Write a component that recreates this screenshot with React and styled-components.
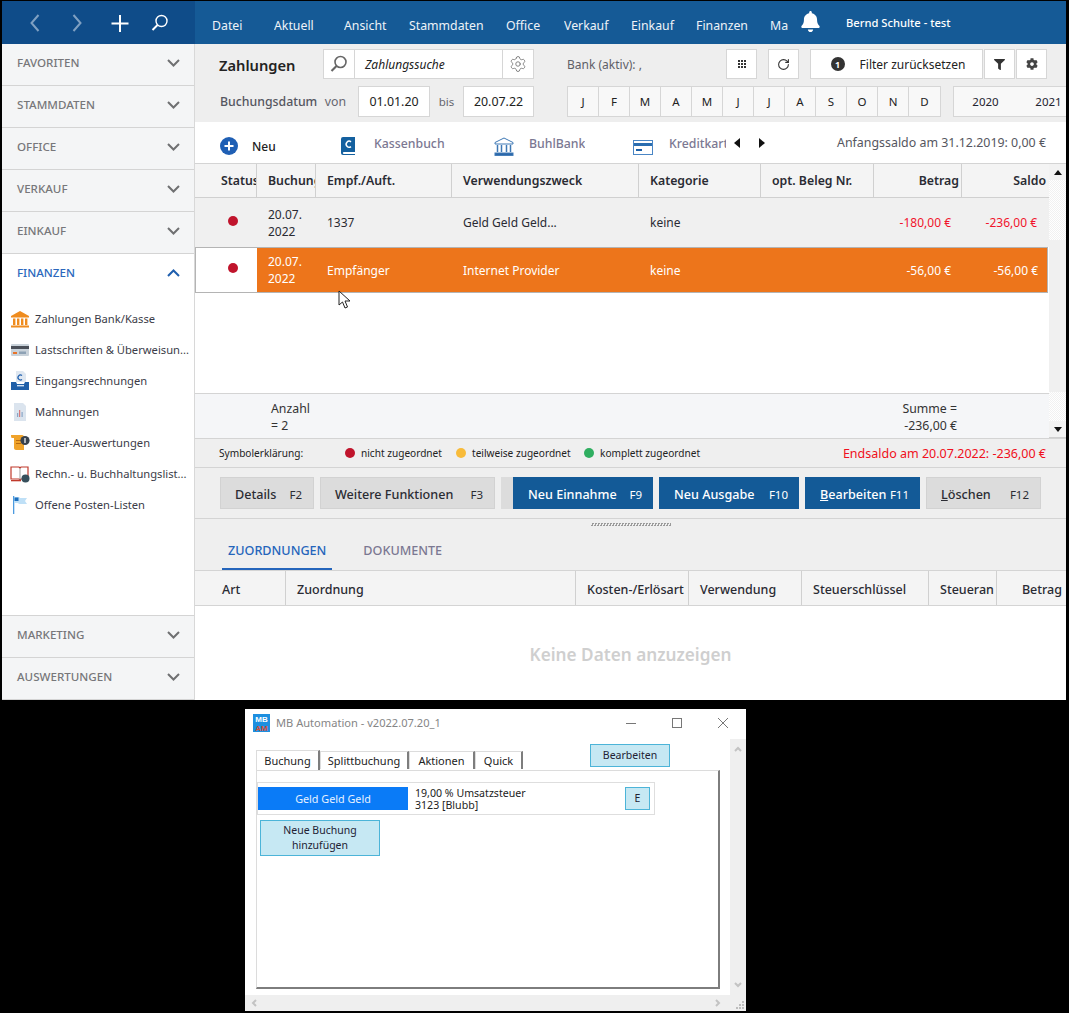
import React from 'react';
import styled, { createGlobalStyle } from 'styled-components';
import { FaBell, FaCog, FaFilter } from 'react-icons/fa';
import { RotateCw, Settings } from 'lucide-react';

const Global = createGlobalStyle`
  html, body { margin: 0; padding: 0; background: #000; }
  * { box-sizing: border-box; }
  body { font-family: "Noto Sans", "Open Sans", sans-serif; font-size: 12px; color: #1f2430; }
`;

const Page = styled.div`
  position: relative; width: 1069px; height: 1013px; background: #000; overflow: hidden;
  padding: 1px 3px 0 2px;
`;
const AppFrame = styled.div`
  width: 1064px; height: 699px; background: #fff; display: flex; flex-direction: column; overflow: hidden;
`;
const TopBar = styled.header`
  display: flex; height: 43px; flex: none; background: #155a96; color: #fff;
`;
const QuickBar = styled.div`
  width: 193px; background: #0f4c89; display: flex; align-items: center; padding-left: 23px; gap: 20px; flex: none;
`;
const QuickIcon = styled.svg`
  width: 22px; height: 22px; fill: none; stroke: ${p => p.$dim ? '#7fa0c2' : '#fff'}; stroke-width: 2; display: block;
`;
const Menu = styled.nav`
  display: flex; align-items: center; padding-left: 17px; flex: 1; position: relative;
`;
const MenuItem = styled.span`
  width: ${p => p.$w}px; flex: none; font-size: 12.3px; white-space: nowrap; overflow: hidden; color: #eef3f8; margin-top: 5px;
`;
const Bell = styled.span`
  display: flex; margin-left: 0; font-size: 21px; margin-top: -2px; width: 46px; flex: none;
`;
const UserName = styled.span`
  font-size: 11.2px; font-weight: 500; color: #fff; margin-top: -1px;
`;

const Body = styled.div`
  flex: 1; display: flex; min-height: 0;
`;
const Sidebar = styled.aside`
  width: 193px; flex: none; background: #fff; border-right: 1px solid #d8d8d8; display: flex; flex-direction: column;
`;
const SideHead = styled.div`
  height: 42px; flex: none; display: flex; align-items: center; justify-content: space-between;
  padding: 0 14px 4px 15px; background: ${p => p.$open ? '#fff' : '#f4f5f6'}; border-bottom: 1px solid ${p => p.$open ? 'transparent' : '#d4d4d4'};
  font-size: 11.6px; font-weight: 500; color: ${p => p.$open ? '#2b68bd' : '#77777a'};
`;
const Chevron = styled.svg`
  width: 13px; height: 8px; fill: none; stroke: ${p => p.$open ? '#1f5fae' : '#6f7072'}; stroke-width: 2;
`;
const SideList = styled.ul`
  list-style: none; margin: 0; padding: 7px 0 0 8px; flex: 1; border-bottom: 1px solid #d4d4d4;
`;
const SideItem = styled.li`
  height: 31px; display: flex; align-items: center; gap: 5px; font-size: 11.2px; color: #3b3c48; white-space: nowrap;
`;
const SideIcon = styled.svg`
  width: 20px; height: 20px; flex: none;
`;

const Main = styled.main`
  flex: 1; min-width: 0; display: flex; flex-direction: column; background: #efefef;
`;
const Toolbar = styled.section`
  height: 78px; flex: none; background: #eeeeee; display: flex; flex-direction: column; gap: 7px; padding: 5px 0 0 24px; overflow: hidden;
`;
const ToolRow = styled.div`
  display: flex; align-items: center; height: ${p => p.$h}px; flex: none;
`;
const PageTitle = styled.h1`
  margin: 0; font-size: 14.7px; font-weight: 600; width: 104px; flex: none; color: #222; margin-top: 1px;
`;
const WhiteBox = styled.div`
  display: flex; align-items: center; justify-content: center; background: #fff; border: 1px solid #d6d6d6;
  width: ${p => p.$w}px; height: 100%; flex: none; margin-left: ${p => p.$ml || 0}px; font-size: ${p => p.$fs || 12}px; color: #222;
  padding-left: ${p => p.$pl || 0}px;
`;
const SearchText = styled(WhiteBox)`
  justify-content: flex-start; padding-left: 10px; font-style: italic; font-size: 12px; border-left: 0; border-right: 0;
`;
const BankText = styled.span`
  font-size: 12px; color: #5f5f68; margin-left: 33px; width: 159px; flex: none;
`;
const DateLabel = styled.span`
  font-weight: 500; font-size: 12.3px; color: #55565f; flex: none; width: 126px; display: flex; justify-content: space-between; margin-left: 1px; white-space: nowrap;
`;
const SmallLabel = styled.span`
  color: #66666e; font-size: 11.5px; width: 33px; flex: none; text-align: center;
`;
const VonLabel = styled.span` font-weight: 400; color: #66666e; `;
const Months = styled.div`
  display: flex; margin-left: 33px; height: 100%; flex: none; border: 1px solid #d6d6d6; background: #f8f8f8;
`;
const Month = styled.span`
  width: 31px; flex: none; display: flex; align-items: center; justify-content: center; font-size: 11.5px; border-right: 1px solid #d6d6d6; color: #222;
  &:last-child { border-right: 0; }
`;
const Years = styled.div`
  display: flex; margin-left: 12px; height: 100%; flex: none; border: 1px solid #d6d6d6; background: #f8f8f8;
`;
const Year = styled.span`
  width: 63px; flex: none; display: flex; align-items: center; justify-content: center; font-size: 11.5px;
`;
const FilterIconCircle = styled.span`
  width: 14px; height: 14px; border-radius: 50%; background: #333; color: #fff; font-size: 9px; font-weight: 700; display: flex; align-items: center; justify-content: center; margin-right: 15px;
`;
const DotsGrid = styled.span`
  display: grid; grid-template-columns: repeat(3, 2px); gap: 1px;
`;
const Dot2 = styled.i` width: 2px; height: 2px; background: #333; display: block; `;

const AccountBar = styled.section`
  height: 41px; flex: none; background: #fff; display: flex; align-items: center; padding-left: 25px; overflow: hidden;
`;
const NewCircle = styled.svg`
  width: 18px; height: 18px; flex: none; margin-top: 6px;
`;
const NewLabel = styled.span`
  font-size: 12px; font-weight: 500; color: #222; margin-left: 14px; width: 89px; flex: none; margin-top: 8px;
`;
const Account = styled.span`
  display: flex; align-items: flex-start; height: 100%; flex: none; width: ${p => p.$w}px; font-size: 12.3px; font-weight: 500; color: #7b7892; overflow: hidden; white-space: nowrap;
`;
const AccountGlyph = styled.svg`
  flex: none; margin-top: ${p => p.$mt}px; display: block;
`;
const AccountText = styled.span`
  margin-left: ${p => p.$ml}px; margin-top: 13px; display: block; flex: none; width: ${p => p.$tw ? p.$tw + 'px' : 'auto'}; overflow: hidden;
`;
const Arrows = styled.span`
  display: flex; gap: 19px; margin-left: 8px; flex: none;
`;
const Triangle = styled.svg` width: 6px; height: 10px; fill: #111; display: block; `;
const Saldo = styled.span`
  margin-left: auto; padding-right: 20px; font-size: 12.4px; color: #555660; white-space: nowrap; margin-top: -1px;
`;

const TableWrap = styled.section`
  height: 275px; flex: none; display: flex; background: #fff; border-top: 1px solid #d4d4d4;
`;
const TableCol = styled.div`
  width: 854px; flex: none; display: flex; flex-direction: column;
`;
const Cols = '62px 59px 136px 187px 122px 113px 88px 87px';
const HeadRow = styled.div`
  display: grid; grid-template-columns: ${Cols}; height: 34px; flex: none; background: #f4f4f4; border-bottom: 1px solid #d0d0d0;
`;
const HeadCell = styled.div`
  display: flex; align-items: center; overflow: hidden; white-space: nowrap; font-size: 12.3px; font-weight: 600; color: #2a2b33;
  padding: ${p => p.$right ? `0 ${p.$pr ?? 2}px 0 0` : `0 0 0 ${p.$pl ?? 11}px`}; justify-content: ${p => p.$right ? 'flex-end' : 'flex-start'};
  border-right: ${p => p.$last ? '0' : '1px solid #d0d0d0'};
`;
const DataRow = styled.div`
  display: grid; grid-template-columns: ${Cols}; flex: none; height: ${p => p.$h}px; position: relative;
  background: ${p => p.$active ? '#ed751b' : '#f0f0f0'}; color: ${p => p.$active ? '#fff' : '#2a2b33'};
  ${p => p.$active ? 'outline: 1px solid #b4b4b4; outline-offset: -1px; width: 853px;' : ''}
`;
const Cell = styled.div`
  display: flex; align-items: center; font-size: 12px; line-height: 17px; padding: ${p => p.$right ? `0 ${p.$pr}px 0 0` : '0 0 0 11px'};
  justify-content: ${p => p.$right ? 'flex-end' : 'flex-start'}; color: ${p => p.$red ? '#f0142c' : 'inherit'};
`;
const StatusCell = styled.div`
  display: flex; align-items: center; padding-left: ${p => p.$white ? 32 : 33}px; background: ${p => p.$white ? '#fff' : 'transparent'};
  ${p => p.$white ? 'border: 1px solid #b4b4b4; border-right: 0;' : ''} padding-bottom: 4px;
`;
const Dot = styled.span`
  width: ${p => p.$s || 10}px; height: ${p => p.$s || 10}px; border-radius: 50%; background: ${p => p.$c}; flex: none; display: block;
`;
const TableSpace = styled.div` flex: 1; background: #fff; `;
const Totals = styled.div`
  height: 45px; flex: none; background: #f5f6f8; border-top: 1px solid #d4d4d4; display: flex; font-size: 12.3px; line-height: 17px; color: #333;
  padding: 6px 0 0 76px;
`;
const TotalRight = styled.div`
  margin-left: auto; margin-right: 92px; text-align: right; white-space: pre;
`;
const ScrollRail = styled.div`
  width: 17px; flex: none; display: flex; flex-direction: column;
  background: repeating-conic-gradient(#f1f1f1 0 25%, #fff 0 50%) 0 0 / 2px 2px;
  border-bottom: 1px solid #cfcfcf;
`;
const ScrollBtn = styled.div`
  height: ${p => p.$h}px; flex: none; background: #f2f2f2; display: flex; align-items: center; justify-content: center;
`;
const ScrollThumb = styled.div`
  height: 152px; margin-top: 60px; margin-bottom: auto; background: #f0f0f0; flex: none;
`;
const ArrowTip = styled.svg` width: 8px; height: 5px; fill: #111; `;

const Legend = styled.section`
  height: 30px; flex: none; background: #efefef; border-top: 1px solid #d4d4d4; border-bottom: 1px solid #d4d4d4; display: flex; align-items: center; padding: 0 20px 0 24px; font-size: 10.1px; color: #222;
`;
const LegendTitle = styled.span` width: 126px; flex: none; `;
const LegendItem = styled.span`
  display: flex; align-items: center; gap: 6px; flex: none; width: ${p => p.$w}px;
`;
const EndSaldo = styled.span`
  margin-left: auto; color: #f01020; font-size: 12.5px; white-space: nowrap;
`;
const Actions = styled.section`
  height: 51px; flex: none; background: #efefef; border-bottom: 1px solid #d4d4d4; display: flex; align-items: flex-start; padding: 9px 0 0 25px; gap: 6px;
`;
const ActionBtn = styled.button`
  width: ${p => p.$w}px; height: 32px; flex: none; border: ${p => p.$blue ? '0' : '1px solid #d2d2d2'}; background: ${p => p.$blue ? '#135a97' : '#dcdcdc'};
  color: ${p => p.$blue ? '#fff' : '#2b2c33'}; font-family: inherit; font-size: 12.6px; font-weight: 500; display: flex; align-items: center; justify-content: space-between;
  padding: 2px 11px 0 ${p => p.$blue ? 15 : 14}px; white-space: nowrap;
`;
const Key = styled.span` font-size: 11.5px; font-weight: 400; `;
const Stub = styled.div`
  width: 12px; height: 32px; flex: none; background: #dcdcdc; margin-right: -6px;
`;
const Grip = styled.div`
  width: 80px; height: 3px; margin: 4px auto 0; flex: none;
  background: repeating-conic-gradient(#9a9a9a 0 25%, #efefef 0 50%) 0 0 / 3px 3px;
`;
const DetailTabs = styled.div`
  height: 45px; flex: none; display: flex; align-items: flex-end; padding-left: 27px; background: #efefef; border-bottom: 1px solid #d4d4d4;
`;
const DetailTab = styled.span`
  font-size: 12.6px; font-weight: 500; color: ${p => p.$on ? '#2565bb' : '#7b7892'}; padding: 0 6px 9px; border-bottom: 2px solid ${p => p.$on ? '#2565bb' : 'transparent'}; margin-right: 25px;
`;
const GridHead = styled.div`
  display: grid; grid-template-columns: 91px 290px 113px 113px 127px 68px 1fr; height: 35px; flex: none; background: #f4f4f4; border-bottom: 1px solid #d4d4d4;
`;
const GridCell = styled(HeadCell)`
  font-weight: 500; font-size: 12.5px; padding-top: 2px;
`;
const Empty = styled.div`
  flex: 1; background: #fff; display: flex; align-items: center; justify-content: center; font-size: 17.2px; font-weight: 600; color: #cfcfcf; padding-top: 2px;
`;
const CursorMark = styled.svg`
  position: absolute; left: 338px; top: 290px; width: 13px; height: 19px;
`;

/* Tool window */
const ToolWindow = styled.div`
  position: absolute; left: 245px; top: 709px; width: 501px; height: 302px; background: #fff; display: flex; flex-direction: column;
`;
const WinTitle = styled.div`
  height: 30px; flex: none; display: flex; align-items: center; padding: 0 0 3px 8px; font-size: 11.1px; color: #858585;
`;
const WinLogo = styled.svg` width: 17px; height: 18px; margin-right: 6px; flex: none; `;
const WinText = styled.span` flex: 1; `;
const WinBtns = styled.div` display: flex; align-items: center; gap: 34px; padding-right: 17px; `;
const WinBtn = styled.svg` width: 12px; height: 12px; stroke: #777; fill: none; stroke-width: 1; display: block; `;
const WinBody = styled.div`
  flex: 1; display: flex; min-height: 0;
`;
const WinContent = styled.div`
  width: 485px; flex: none; padding: 5px 0 0 11px; display: flex; flex-direction: column; background: #fff;
`;
const TabStrip = styled.div`
  display: flex; height: 26px; flex: none; align-items: flex-end;
`;
const WinTab = styled.span`
  width: ${p => p.$w}px; height: ${p => p.$on ? 20 : 18}px; flex: none; font-size: 11px; color: #222; display: flex; align-items: center; justify-content: center; background: #fff;
  border-top: 1px solid #dcdcdc; border-left: 1px solid #dcdcdc; border-right: 2px solid #7d7d7d; margin-bottom: ${p => p.$on ? '0' : '1px'}; padding-bottom: 1px;
`;
const LightBtn = styled.button`
  background: #c6e8f3; border: 1px solid #4cb4d8; color: #223; font-family: inherit; font-size: 10.5px; padding: 0; flex: none; line-height: 15px;
  width: ${p => p.$w}px; height: ${p => p.$h}px; margin: ${p => p.$m || 0}; align-self: ${p => p.$top ? 'flex-start' : 'auto'};
`;
const Panel = styled.div`
  width: 464px; height: 219px; flex: none; background: #fff; border: 1px solid #dcdcdc; border-right: 2px solid #7d7d7d; border-bottom: 2px solid #7d7d7d; padding: 11px 0 0 0;
`;
const BookingCard = styled.div`
  width: 398px; height: 33px; border: 1px solid #dedede; display: flex; align-items: center;
`;
const BookingName = styled.div`
  width: 150px; height: 23px; background: #0a7bf7; color: #e8f2ff; font-size: 10.8px; display: flex; align-items: center; justify-content: center; flex: none;
`;
const BookingInfo = styled.div`
  font-size: 10.6px; line-height: 12px; color: #222; margin-left: 7px; flex: 1;
`;
const VScroll = styled.div`
  width: 16px; flex: none; background: #efefef; display: flex; flex-direction: column; justify-content: space-between; align-items: center; padding: 6px 0 6px;
`;
const HScroll = styled.div`
  height: 16px; flex: none; background: #efefef; display: flex; justify-content: space-between; align-items: center; padding: 0 24px 0 5px; position: relative;
`;
const ScrollGlyph = styled.svg` width: 8px; height: 8px; fill: none; stroke: #c3c3c3; stroke-width: 2; display: block; `;
const SizeGrip = styled.svg` position: absolute; right: 2px; bottom: 2px; width: 9px; height: 9px; fill: #bdbdbd; `;

const Down = ({ open }) => (
  <Chevron $open={open} viewBox="0 0 13 8"><path d={open ? 'M1 7l5.5-5.5L12 7' : 'M1 1l5.5 5.5L12 1'} /></Chevron>
);

const SideHeads = ['FAVORITEN', 'STAMMDATEN', 'OFFICE', 'VERKAUF', 'EINKAUF'];

const BankIcon = ({ c }) => (
  <SideIcon viewBox="0 0 20 20" fill={c}>
    <path d="M10 2L1 7v1.5h18V7z" /><rect x="3" y="9.5" width="2.4" height="6.5" /><rect x="7" y="9.5" width="2.4" height="6.5" /><rect x="11" y="9.5" width="2.4" height="6.5" /><rect x="15" y="9.5" width="2.4" height="6.5" /><rect x="1" y="16.5" width="18" height="2" />
  </SideIcon>
);
const CardIcon = () => (
  <SideIcon viewBox="0 0 20 20">
    <rect x="1" y="4" width="18" height="12" rx="1" fill="#c9d2da" /><rect x="1" y="6" width="18" height="3" fill="#4a4f58" /><rect x="3" y="12" width="4" height="2" fill="#e8742b" /><rect x="9" y="11.5" width="7" height="2.5" fill="#8ea2b5" />
  </SideIcon>
);
const InboxIcon = () => (
  <SideIcon viewBox="0 0 20 20">
    <path d="M6 0h7l3 3v8H6z" fill="#dfe7f0" /><path d="M12 4.5a2.5 2.5 0 100 4" fill="none" stroke="#1f5fae" strokeWidth="1.2" /><path d="M1 11h5l1 2h7l1-2h4v8H1z" fill="#1f5fa8" /><rect x="7" y="14" width="7" height="1.4" fill="#cfe0f3" />
  </SideIcon>
);
const DunIcon = () => (
  <SideIcon viewBox="0 0 20 20">
    <path d="M4 1h9l3 3v15H4z" fill="#dbe4ee" /><rect x="9" y="8" width="1.2" height="7" fill="#d77a7a" /><rect x="7" y="11" width="1.2" height="4" fill="#8ba6c6" /><rect x="11.5" y="10" width="1.2" height="5" fill="#8ba6c6" />
  </SideIcon>
);
const TaxIcon = () => (
  <SideIcon viewBox="0 0 20 20">
    <path d="M1 2h11c2 0 2 2 2 3v12H6c-1 0-2-1-2-2V5H2C1 5 1 3 1 2z" fill="#f0a32a" /><rect x="6" y="7" width="5" height="1" fill="#b76a10" /><rect x="6" y="10" width="5" height="1" fill="#b76a10" /><circle cx="15" cy="7.5" r="4.6" fill="#38424e" /><rect x="14.4" y="5" width="1.2" height="5" fill="#fff" />
  </SideIcon>
);
const BookIcon = () => (
  <SideIcon viewBox="0 0 20 20">
    <path d="M1 3h8l1 1 1-1h7v12h-7l-1 1-1-1H1z" fill="#fff" stroke="#c0392b" strokeWidth="1.2" /><rect x="9.6" y="4" width=".8" height="12" fill="#888" /><circle cx="15.5" cy="14.5" r="4" fill="#37505c" /><rect x="1" y="16" width="10" height="1.3" fill="#c0392b" />
  </SideIcon>
);
const FlagIcon = () => (
  <SideIcon viewBox="0 0 20 20">
    <rect x="3" y="1" width="1.3" height="18" fill="#4d9be0" /><path d="M4 2h5l1 1h7l-2 3 2 3h-8l-1-1H4z" fill="#bfe0f7" /><rect x="4.5" y="2.5" width="4" height="3.5" fill="#1c6fbe" />
  </SideIcon>
);

const Magnifier = ({ color = '#666', width = 1.6 }) => (
  <svg width="18" height="18" viewBox="0 0 18 18" fill="none" stroke={color} strokeWidth={width}>
    <circle cx="10.5" cy="7" r="5.5" /><path d="M6.5 11L1.5 16" strokeWidth={width + .6} />
  </svg>
);

const heads = [['Status', 26], ['Buchung', 11], ['Empf./Auft.', 11], ['Verwendungszweck', 11], ['Kategorie', 11], ['opt. Beleg Nr.', 11]];

export default function App() {
  return (
    <Page>
      <Global />
      <AppFrame>
        <TopBar>
          <QuickBar>
            <QuickIcon $dim viewBox="0 0 22 22"><path d="M13.5 3l-7 8 7 8" /></QuickIcon>
            <QuickIcon $dim viewBox="0 0 22 22"><path d="M6.5 3l7 8-7 8" /></QuickIcon>
            <QuickIcon viewBox="0 0 22 22"><path d="M11 3v17M2.5 11.5h17" /></QuickIcon>
            <Magnifier color="#fff" width={1.4} />
          </QuickBar>
          <Menu>
            <MenuItem $w={62}>Datei</MenuItem>
            <MenuItem $w={70}>Aktuell</MenuItem>
            <MenuItem $w={65}>Ansicht</MenuItem>
            <MenuItem $w={97}>Stammdaten</MenuItem>
            <MenuItem $w={58}>Office</MenuItem>
            <MenuItem $w={67}>Verkauf</MenuItem>
            <MenuItem $w={65}>Einkauf</MenuItem>
            <MenuItem $w={74}>Finanzen</MenuItem>
            <MenuItem $w={30}>Ma</MenuItem>
            <Bell><FaBell /></Bell>
            <UserName>Bernd Schulte - test</UserName>
          </Menu>
        </TopBar>
        <Body>
          <Sidebar>
            {SideHeads.map(h => <SideHead key={h}>{h}<Down /></SideHead>)}
            <SideHead $open>FINANZEN<Down open /></SideHead>
            <SideList>
              <SideItem><BankIcon c="#ef8c1f" />Zahlungen Bank/Kasse</SideItem>
              <SideItem><CardIcon />Lastschriften &amp; Überweisun...</SideItem>
              <SideItem><InboxIcon />Eingangsrechnungen</SideItem>
              <SideItem><DunIcon />Mahnungen</SideItem>
              <SideItem><TaxIcon />Steuer-Auswertungen</SideItem>
              <SideItem><BookIcon />Rechn.- u. Buchhaltungslist...</SideItem>
              <SideItem><FlagIcon />Offene Posten-Listen</SideItem>
            </SideList>
            <SideHead>MARKETING<Down /></SideHead>
            <SideHead>AUSWERTUNGEN<Down /></SideHead>
          </Sidebar>
          <Main>
            <Toolbar>
              <ToolRow $h={30}>
                <PageTitle>Zahlungen</PageTitle>
                <WhiteBox $w={32}><Magnifier /></WhiteBox>
                <SearchText $w={147}>Zahlungssuche</SearchText>
                <WhiteBox $w={32}><Settings size={18} color="#777" strokeWidth={1.2} /></WhiteBox>
                <BankText>Bank (aktiv): ,</BankText>
                <WhiteBox $w={31}><DotsGrid>{Array.from({ length: 9 }).map((_, i) => <Dot2 key={i} />)}</DotsGrid></WhiteBox>
                <WhiteBox $w={31} $ml={11}><RotateCw size={13} color="#333" strokeWidth={2} /></WhiteBox>
                <WhiteBox $w={173} $ml={11} $pl={3}><FilterIconCircle>1</FilterIconCircle>Filter zurücksetzen</WhiteBox>
                <WhiteBox $w={31} $ml={1}><FaFilter size={11} color="#333" /></WhiteBox>
                <WhiteBox $w={31} $ml={1}><FaCog size={12} color="#444" /></WhiteBox>
              </ToolRow>
              <ToolRow $h={31}>
                <DateLabel>Buchungsdatum <VonLabel>von</VonLabel></DateLabel>
                <WhiteBox $w={72} $ml={12} $fs={12.4}>01.01.20</WhiteBox>
                <SmallLabel>bis</SmallLabel>
                <WhiteBox $w={71} $fs={12.4}>20.07.22</WhiteBox>
                <Months>{['J', 'F', 'M', 'A', 'M', 'J', 'J', 'A', 'S', 'O', 'N', 'D'].map((m, i) => <Month key={i}>{m}</Month>)}</Months>
                <Years><Year>2020</Year><Year>2021</Year></Years>
              </ToolRow>
            </Toolbar>
            <AccountBar>
              <NewCircle viewBox="0 0 18 18"><circle cx="9" cy="9" r="9" fill="#1f5fb4" /><path d="M9 4.5v9M4.5 9h9" stroke="#fff" strokeWidth="2" /></NewCircle>
              <NewLabel>Neu</NewLabel>
              <Account $w={153}>
                <AccountGlyph $mt={15} width="14" height="18" viewBox="0 0 14 18">
                  <path d="M2 0h12v15H2.5a1.2 1.2 0 000 2H14v1H2a2 2 0 01-2-2V2a2 2 0 012-2z" fill="#14609f" />
                  <path d="M10 4.8a3 3 0 100 4.8" fill="none" stroke="#fff" strokeWidth="1.5" />
                </AccountGlyph>
                <AccountText $ml={19}>Kassenbuch</AccountText>
              </Account>
              <Account $w={139}>
                <AccountGlyph $mt={15} width="20" height="19" viewBox="0 0 20 19" fill="none" stroke="#3e78b5"><path d="M10 1L1 5.5v1.5h18V5.5z" /><path d="M3.5 8v7M7.5 8v7M12.5 8v7M16.5 8v7" strokeWidth="1.5" /><rect x="1" y="16" width="18" height="2.4" fill="#2a67a9" /></AccountGlyph>
                <AccountText $ml={15}>BuhlBank</AccountText>
              </Account>
              <Account $w={93}>
                <AccountGlyph $mt={18} width="20" height="15" viewBox="0 0 20 15"><rect x=".5" y=".5" width="19" height="14" fill="#fff" stroke="#4a86c5" /><rect x="1" y="3" width="18" height="3" fill="#2a6db0" /><rect x="3" y="9" width="6" height="2" fill="#1c5fa6" /></AccountGlyph>
                <AccountText $ml={16} $tw={57}>Kreditkarte</AccountText>
              </Account>
              <Arrows>
                <Triangle viewBox="0 0 6 10"><path d="M6 0v10L0 5z" /></Triangle>
                <Triangle viewBox="0 0 6 10"><path d="M0 0v10l6-5z" /></Triangle>
              </Arrows>
              <Saldo>Anfangssaldo am 31.12.2019: 0,00 €</Saldo>
            </AccountBar>
            <TableWrap>
              <TableCol>
                <HeadRow>
                  {heads.map(([t, pl]) => <HeadCell key={t} $pl={pl}>{t}</HeadCell>)}
                  <HeadCell $right>Betrag</HeadCell>
                  <HeadCell $right $last $pr={3}>Saldo</HeadCell>
                </HeadRow>
                <DataRow $h={49}>
                  <StatusCell><Dot $c="#c0142c" /></StatusCell>
                  <Cell>20.07.<br />2022</Cell>
                  <Cell>1337</Cell>
                  <Cell>Geld Geld Geld...</Cell>
                  <Cell>keine</Cell>
                  <Cell />
                  <Cell $right $pr={11} $red>-180,00 €</Cell>
                  <Cell $right $pr={12} $red>-236,00 €</Cell>
                </DataRow>
                <DataRow $h={46} $active>
                  <StatusCell $white><Dot $c="#c0142c" /></StatusCell>
                  <Cell>20.07.<br />2022</Cell>
                  <Cell>Empfänger</Cell>
                  <Cell>Internet Provider</Cell>
                  <Cell>keine</Cell>
                  <Cell />
                  <Cell $right $pr={11}>-56,00 €</Cell>
                  <Cell $right $pr={11}>-56,00 €</Cell>
                </DataRow>
                <TableSpace />
                <Totals>
                  <span>Anzahl<br />= 2</span>
                  <TotalRight>{'Summe =\n-236,00 €'}</TotalRight>
                </Totals>
              </TableCol>
              <ScrollRail>
                <ScrollBtn $h={16}><ArrowTip viewBox="0 0 8 5"><path d="M4 0l4 5H0z" /></ArrowTip></ScrollBtn>
                <ScrollThumb />
                <ScrollBtn $h={16}><ArrowTip viewBox="0 0 8 5"><path d="M4 5l4-5H0z" /></ArrowTip></ScrollBtn>
              </ScrollRail>
            </TableWrap>
            <Legend>
              <LegendTitle>Symbolerklärung:</LegendTitle>
              <LegendItem $w={111}><Dot $c="#c0142c" />nicht zugeordnet</LegendItem>
              <LegendItem $w={128}><Dot $c="#f8bb3a" />teilweise zugeordnet</LegendItem>
              <LegendItem $w={128}><Dot $c="#2fae60" />komplett zugeordnet</LegendItem>
              <EndSaldo>Endsaldo am 20.07.2022: -236,00 €</EndSaldo>
            </Legend>
            <Actions>
              <ActionBtn $w={94}>Details<Key>F2</Key></ActionBtn>
              <ActionBtn $w={175}>Weitere Funktionen<Key>F3</Key></ActionBtn>
              <Stub />
              <ActionBtn $w={140} $blue>Neu Einnahme<Key>F9</Key></ActionBtn>
              <ActionBtn $w={140} $blue>Neu Ausgabe<Key>F10</Key></ActionBtn>
              <ActionBtn $w={115} $blue><span><u>B</u>earbeiten</span><Key>F11</Key></ActionBtn>
              <ActionBtn $w={115}><span><u>L</u>öschen</span><Key>F12</Key></ActionBtn>
            </Actions>
            <Grip />
            <DetailTabs>
              <DetailTab $on>ZUORDNUNGEN</DetailTab>
              <DetailTab>DOKUMENTE</DetailTab>
            </DetailTabs>
            <GridHead>
              <GridCell $pl={27}>Art</GridCell>
              <GridCell>Zuordnung</GridCell>
              <GridCell>Kosten-/Erlösart</GridCell>
              <GridCell>Verwendung</GridCell>
              <GridCell>Steuerschlüssel</GridCell>
              <GridCell>Steueran</GridCell>
              <GridCell $right $last $pr={4}>Betrag</GridCell>
            </GridHead>
            <Empty>Keine Daten anzuzeigen</Empty>
          </Main>
        </Body>
      </AppFrame>
      <CursorMark viewBox="0 0 13 19"><path d="M1 1v14l3.5-3 2.5 6 2.5-1-2.5-6h5z" fill="#fff" stroke="#222" strokeWidth="1" /></CursorMark>
      <ToolWindow>
        <WinTitle>
          <WinLogo viewBox="0 0 17 18">
            <rect width="17" height="18" fill="#1d8fe0" />
            <text x="8.5" y="8" fontSize="8" fontWeight="700" fill="#fff" textAnchor="middle" fontFamily="Liberation Sans">MB</text>
            <text x="8.5" y="17" fontSize="8" fontWeight="700" fill="#d8503a" textAnchor="middle" fontFamily="Liberation Sans">AM</text>
          </WinLogo>
          <WinText>MB Automation - v2022.07.20_1</WinText>
          <WinBtns>
            <WinBtn viewBox="0 0 12 12"><path d="M1 6.5h10" /></WinBtn>
            <WinBtn viewBox="0 0 12 12"><rect x="1.5" y="1.5" width="9" height="9" /></WinBtn>
            <WinBtn viewBox="0 0 12 12"><path d="M1 1l10 10M11 1L1 11" /></WinBtn>
          </WinBtns>
        </WinTitle>
        <WinBody>
          <WinContent>
            <TabStrip>
              <WinTab $w={64} $on>Buchung</WinTab>
              <WinTab $w={89}>Splittbuchung</WinTab>
              <WinTab $w={66}>Aktionen</WinTab>
              <WinTab $w={48}>Quick</WinTab>
              <LightBtn $w={80} $h={23} $m="0 0 3px 67px" $top>Bearbeiten</LightBtn>
            </TabStrip>
            <Panel>
              <BookingCard>
                <BookingName>Geld Geld Geld</BookingName>
                <BookingInfo>19,00 % Umsatzsteuer<br />3123 [Blubb]</BookingInfo>
                <LightBtn $w={25} $h={23} $m="0 4px 0 0">E</LightBtn>
              </BookingCard>
              <LightBtn $w={120} $h={36} $m="5px 0 0 3px">Neue Buchung<br />hinzufügen</LightBtn>
            </Panel>
          </WinContent>
          <VScroll>
            <ScrollGlyph viewBox="0 0 8 8"><path d="M1 6l3-3 3 3" /></ScrollGlyph>
            <ScrollGlyph viewBox="0 0 8 8"><path d="M1 2l3 3 3-3" /></ScrollGlyph>
          </VScroll>
        </WinBody>
        <HScroll>
          <ScrollGlyph viewBox="0 0 8 8"><path d="M6 1L3 4l3 3" /></ScrollGlyph>
          <ScrollGlyph viewBox="0 0 8 8"><path d="M2 1l3 3-3 3" /></ScrollGlyph>
          <SizeGrip viewBox="0 0 9 9"><rect x="7" y="1" width="2" height="2" /><rect x="4" y="4" width="2" height="2" /><rect x="7" y="4" width="2" height="2" /><rect x="1" y="7" width="2" height="2" /><rect x="4" y="7" width="2" height="2" /><rect x="7" y="7" width="2" height="2" /></SizeGrip>
        </HScroll>
      </ToolWindow>
    </Page>
  );
}
